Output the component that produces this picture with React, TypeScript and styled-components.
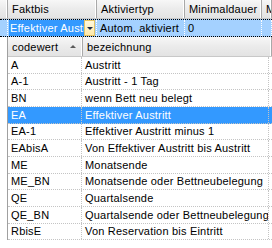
import React from "react";
import styled, { createGlobalStyle } from "styled-components";

const Global = createGlobalStyle`
  html, body { margin: 0; padding: 0; background: #fff; }
  body { font-family: "Liberation Sans", Arial, sans-serif; font-size: 11px; letter-spacing: 0.2px; color: #000; }
`;

const Frame = styled.div`
  width: 272px;
  height: 248px;
  overflow: hidden;
  background: #fff;
  display: flex;
  flex-direction: column;
`;

const HeaderBar = styled.div<{ $cols: string; $h?: number }>`
  display: grid;
  grid-template-columns: ${(p) => p.$cols};
  height: ${(p) => p.$h ?? 19}px;
  flex: none;
  background: linear-gradient(#f7f7f7, #ebebeb 50%, #e3e3e3);
  border-bottom: 1px solid #c8c8c8;
  box-sizing: border-box;
`;

const HeaderCell = styled.div`
  display: flex;
  align-items: center;
  padding-left: 4px;
  border-right: 1px solid #a9a9a9;
  box-shadow: inset -1px 0 0 #fff;
  white-space: nowrap;
  overflow: hidden;
  position: relative;
`;

const SortArrow = styled.span`
  position: absolute;
  right: 6px;
  top: 8px;
  width: 0;
  height: 0;
  border-left: 3px solid transparent;
  border-right: 3px solid transparent;
  border-bottom: 3px solid #5a5a5a;
`;

const ParentRow = styled.div<{ $cols: string }>`
  display: grid;
  grid-template-columns: ${(p) => p.$cols};
  height: 18px;
  flex: none;
  background: #a4d1ff;
  border-top: 1px dotted #000;
  border-bottom: 1px dotted #000;
  box-sizing: border-box;
`;

const ParentCell = styled.div`
  display: flex;
  align-items: center;
  padding-left: 3px;
  border-right: 1px dotted #fff;
  white-space: nowrap;
  overflow: hidden;
`;

const EditorCell = styled.div`
  display: flex;
  align-items: stretch;
  border-right: 1px dotted #fff;
  padding: 0 1px 0 1px;
`;

const EditorText = styled.div`
  flex: 1;
  background: #3399ff;
  color: #fff;
  display: flex;
  align-items: center;
  padding-left: 1px;
  white-space: nowrap;
  overflow: hidden;
`;

const DropButton = styled.div`
  width: 11px;
  flex: none;
  box-sizing: border-box;
  border: 1px solid #e5c365;
  background: linear-gradient(#fff9dc, #ffe9a8);
  display: flex;
  align-items: center;
  justify-content: center;
`;

const DropArrow = styled.span`
  width: 0;
  height: 0;
  border-left: 3px solid transparent;
  border-right: 3px solid transparent;
  border-top: 3px solid #1c2b4a;
`;

const ChildArea = styled.div`
  flex: 1;
  padding-left: 7px;
  display: flex;
  flex-direction: column;
`;

const ChildGrid = styled.div`
  border-left: 1px solid #a0a0a0;
  display: flex;
  flex-direction: column;
`;

const DataRow = styled.div<{ $selected?: boolean }>`
  display: grid;
  grid-template-columns: 74px 187px;
  height: 16.66px;
  box-sizing: border-box;
  border-bottom: 1px dotted #c4c4c4;
  background: ${(p) => (p.$selected ? "#3399ff" : "#fff")};
  color: ${(p) => (p.$selected ? "#fff" : "#000")};
`;

const DataCell = styled.div`
  display: flex;
  align-items: center;
  padding-left: 3px;
  border-right: 1px dotted #c4c4c4;
  white-space: nowrap;
  overflow: hidden;
`;

const topCols = "8px 89px 88px 77px 10px";
const childCols = "75px 189px";

const rows: [string, string][] = [
  ["A", "Austritt"],
  ["A-1", "Austritt - 1 Tag"],
  ["BN", "wenn Bett neu belegt"],
  ["EA", "Effektiver Austritt"],
  ["EA-1", "Effektiver Austritt minus 1"],
  ["EAbisA", "Von Effektiver Austritt bis Austritt"],
  ["ME", "Monatsende"],
  ["ME_BN", "Monatsende oder Bettneubelegung"],
  ["QE", "Quartalsende"],
  ["QE_BN", "Quartalsende oder Bettneubelegung"],
  ["RbisE", "Von Reservation bis Eintritt"],
];

export default function App() {
  return (
    <Frame>
      <Global />
      <HeaderBar $cols={topCols}>
        <HeaderCell />
        <HeaderCell>Faktbis</HeaderCell>
        <HeaderCell>Aktiviertyp</HeaderCell>
        <HeaderCell>Minimaldauer</HeaderCell>
        <HeaderCell>M</HeaderCell>
      </HeaderBar>
      <ParentRow $cols={topCols}>
        <ParentCell />
        <EditorCell>
          <EditorText>Effektiver Austritt</EditorText>
          <DropButton>
            <DropArrow />
          </DropButton>
        </EditorCell>
        <ParentCell>Autom. aktiviert</ParentCell>
        <ParentCell>0</ParentCell>
        <ParentCell />
      </ParentRow>
      <ChildArea>
        <ChildGrid>
          <HeaderBar $cols={childCols} $h={20}>
            <HeaderCell>
              codewert
              <SortArrow />
            </HeaderCell>
            <HeaderCell>bezeichnung</HeaderCell>
          </HeaderBar>
          {rows.map(([c, b]) => (
            <DataRow key={c} $selected={c === "EA"}>
              <DataCell>{c}</DataCell>
              <DataCell>{b}</DataCell>
            </DataRow>
          ))}
        </ChildGrid>
      </ChildArea>
    </Frame>
  );
}
